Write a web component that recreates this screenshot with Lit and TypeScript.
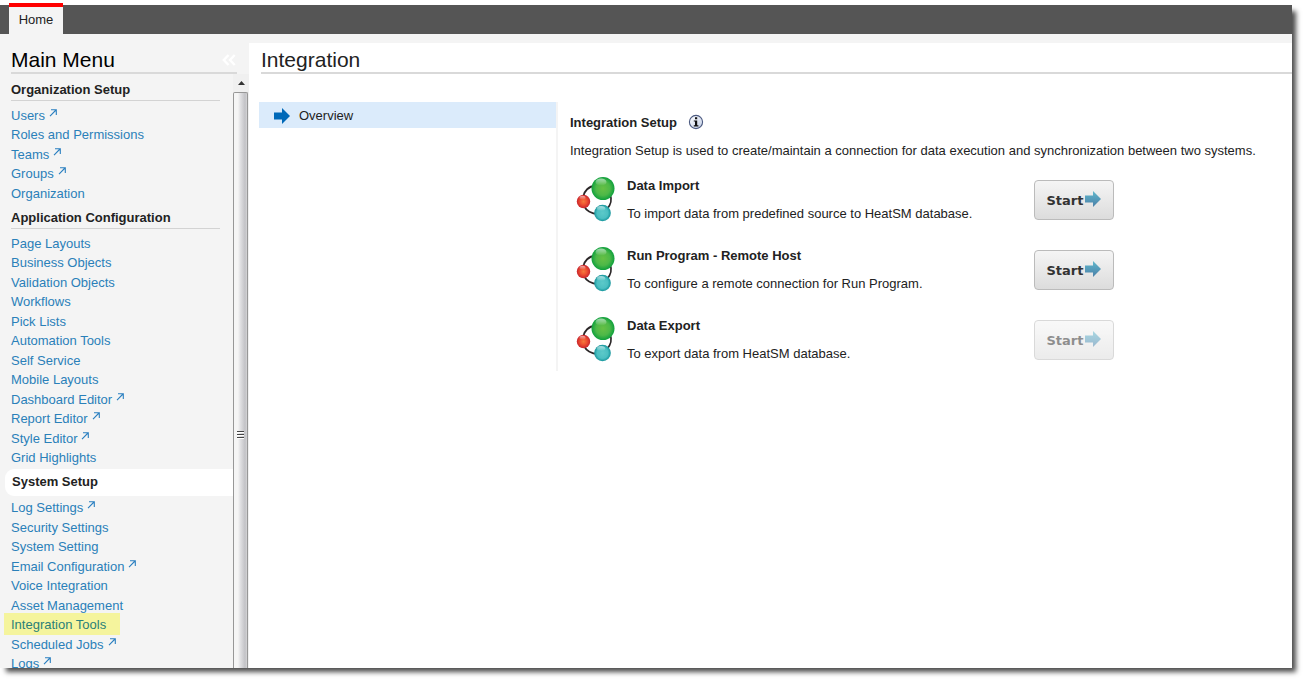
import { LitElement, html, css, svg, nothing } from "lit";
import { customElement } from "lit/decorators.js";
import { classMap } from "lit/directives/class-map.js";

interface MenuLink {
  label: string;
  external?: boolean;
  highlighted?: boolean;
}

interface MenuSection {
  title: string;
  active?: boolean;
  links: MenuLink[];
}

interface SetupTask {
  title: string;
  description: string;
  disabled?: boolean;
}

const MENU: MenuSection[] = [
  {
    title: "Organization Setup",
    links: [
      { label: "Users", external: true },
      { label: "Roles and Permissions" },
      { label: "Teams", external: true },
      { label: "Groups", external: true },
      { label: "Organization" },
    ],
  },
  {
    title: "Application Configuration",
    links: [
      { label: "Page Layouts" },
      { label: "Business Objects" },
      { label: "Validation Objects" },
      { label: "Workflows" },
      { label: "Pick Lists" },
      { label: "Automation Tools" },
      { label: "Self Service" },
      { label: "Mobile Layouts" },
      { label: "Dashboard Editor", external: true },
      { label: "Report Editor", external: true },
      { label: "Style Editor", external: true },
      { label: "Grid Highlights" },
    ],
  },
  {
    title: "System Setup",
    active: true,
    links: [
      { label: "Log Settings", external: true },
      { label: "Security Settings" },
      { label: "System Setting" },
      { label: "Email Configuration", external: true },
      { label: "Voice Integration" },
      { label: "Asset Management" },
      { label: "Integration Tools", highlighted: true },
      { label: "Scheduled Jobs", external: true },
      { label: "Logs", external: true },
    ],
  },
];

const TASKS: SetupTask[] = [
  { title: "Data Import", description: "To import data from predefined source to HeatSM database." },
  { title: "Run Program - Remote Host", description: "To configure a remote connection for Run Program." },
  { title: "Data Export", description: "To export data from HeatSM database.", disabled: true },
];

const arrowPath = svg`<path d="M0 4.5H8V0L16 8L8 16V11.5H0Z"/>`;

@customElement("main-menu")
export class MainMenu extends LitElement {
  static styles = css`
    :host {
      display: grid;
      grid-template-rows: auto minmax(0, 1fr);
      min-height: 0;
      background: #f4f4f4;
    }
    .head {
      display: flex;
      justify-content: space-between;
      align-items: flex-end;
      height: 29px;
      margin: 9px 12px 0 11px;
      border-bottom: 2px solid #d9d9d9;
    }
    .title {
      margin: 0;
      font-size: 21px;
      font-weight: 400;
      line-height: 24px;
      color: #000;
    }
    .collapse {
      display: flex;
      padding: 0 1px 6px 0;
      border: 0;
      background: none;
    }
    .body {
      display: grid;
      grid-template-columns: minmax(0, 1fr) 16px;
      min-height: 0;
    }
    .sections {
      min-height: 0;
      overflow: hidden;
      padding-top: 1px;
    }
    .heading {
      margin: 0 13px 5px 11px;
      padding: 5px 0 0;
      border-bottom: 1px solid #d3d3d3;
      font-size: 13px;
      font-weight: 700;
      line-height: 1.5;
      color: #222;
    }
    .heading.active {
      margin: 1px 0 2px 5px;
      padding: 3px 0 5px 7px;
      border: 0;
      border-radius: 9px 0 0 9px;
      background: #fff;
    }
    .links {
      margin: 0;
      padding: 0 0 0 11px;
      list-style: none;
      line-height: 1.5;
    }
    .link {
      color: #2a80b9;
      text-decoration: none;
    }
    .link.highlighted {
      margin-left: -7px;
      padding: 4px 14px 3px 7px;
      background: #f5f49d;
      color: #2a8078;
    }
    .external {
      width: 8px;
      height: 8px;
      margin-left: 4px;
      vertical-align: 3px;
    }
    .scroll {
      display: grid;
      grid-template-rows: 18px minmax(0, 1fr);
      min-height: 0;
      background: #f0f0f0;
    }
    .up {
      display: grid;
      place-items: center;
    }
    .thumb {
      display: grid;
      place-items: center;
      box-sizing: border-box;
      margin-right: 1px;
      border: 1px solid #979797;
      border-bottom: 0;
      border-radius: 2px 2px 0 0;
      background: linear-gradient(90deg, #f5f5f5 0 30%, #e4e4e6 45%, #c2c2c6 85%, #d4d4d6);
    }
    .grip {
      margin-top: 108px;
    }
  `;

  render() {
    return html`
      <div class="head">
        <h2 class="title">Main Menu</h2>
        <button class="collapse" aria-label="Collapse menu">
          <svg width="14" height="12" viewBox="0 0 14 12" fill="none" stroke="#fff" stroke-width="2.4">
            <path d="M6.5 1L1.8 6L6.5 11M12.7 1L8 6L12.7 11" />
          </svg>
        </button>
      </div>
      <div class="body">
        <nav class="sections" aria-label="Main Menu">
          ${MENU.map(
            (section) => html`
              <h3 class=${classMap({ heading: true, active: !!section.active })}>${section.title}</h3>
              <ul class="links">
                ${section.links.map(
                  (link) => html`<li>
                    <a class=${classMap({ link: true, highlighted: !!link.highlighted })} href="#"
                      >${link.label}${link.external
                        ? html`<svg class="external" viewBox="0 0 8 8" fill="none" stroke="#2a7fc0" stroke-width="1.1">
                            <path d="M1 7.2L7 1M2 .7H7.3V6" />
                          </svg>`
                        : nothing}</a
                    >
                  </li>`
                )}
              </ul>
            `
          )}
        </nav>
        <div class="scroll" aria-hidden="true">
          <div class="up">
            <svg width="7" height="4" viewBox="0 0 7 4" fill="#333"><path d="M0 4L3.5 0L7 4Z" /></svg>
          </div>
          <div class="thumb">
            <svg class="grip" width="7" height="8" viewBox="0 0 7 8" stroke="#444">
              <path d="M0 .5H7M0 3.5H7M0 6.5H7" />
              <path d="M0 1.5H7M0 4.5H7M0 7.5H7" stroke="#fff" />
            </svg>
          </div>
        </div>
      </div>
    `;
  }
}

@customElement("setup-task")
export class SetupTaskRow extends LitElement {
  static properties = { task: { attribute: false } };
  declare task: SetupTask;

  static styles = css`
    :host {
      display: grid;
      grid-template-columns: 57px minmax(0, 407px) 80px;
      height: 70px;
    }
    .icon {
      margin: 5px 0 0 6px;
    }
    .name {
      margin: 5px 0 8px;
      font-size: 13px;
      font-weight: 700;
      line-height: 20px;
      color: #222;
    }
    .text {
      margin: 0;
      line-height: 20px;
    }
    .start {
      display: flex;
      align-items: center;
      justify-content: center;
      gap: 2px;
      box-sizing: border-box;
      height: 40px;
      margin-top: 9px;
      padding: 0;
      border: 1px solid #bbb;
      border-radius: 4px;
      background: linear-gradient(#f5f5f5, #dcdcdc);
      color: #333;
      font: 700 13px "DejaVu Sans", sans-serif;
    }
    .start:disabled {
      opacity: 0.55;
    }
    .arrow {
      margin-bottom: 2px;
    }
  `;

  render() {
    const { title, description, disabled } = this.task;
    return html`
      <svg class="icon" width="40" height="46" viewBox="0 0 40 46" fill="none">
        <defs>
          <radialGradient id="green"><stop offset="0" stop-color="#67c044" /><stop offset=".6" stop-color="#4db848" /><stop offset="1" stop-color="#0fa03c" /></radialGradient>
          <radialGradient id="red"><stop offset="0" stop-color="#f47a3c" /><stop offset=".5" stop-color="#ee5030" /><stop offset="1" stop-color="#c9252c" /></radialGradient>
          <radialGradient id="teal"><stop offset="0" stop-color="#5cc9c9" /><stop offset=".65" stop-color="#4bbfc2" /><stop offset="1" stop-color="#16959b" /></radialGradient>
          <linearGradient id="shine" x2="0" y2="1"><stop stop-color="#fff" stop-opacity=".6" /><stop offset="1" stop-color="#fff" stop-opacity="0" /></linearGradient>
        </defs>
        <path d="M19 10C13 10 8 15 7 21M8 30C10 34 15 38 22 38M31 33C35 29 36 23 34 18" stroke="#2b2728" stroke-width="1.8" />
        <circle cx="27" cy="12.5" r="11.5" fill="url(#green)" />
        <circle cx="7.5" cy="25.5" r="6.7" fill="url(#red)" />
        <circle cx="26.5" cy="37" r="8.3" fill="url(#teal)" />
        <ellipse cx="25" cy="6" rx="5.5" ry="3.6" fill="url(#shine)" />
        <ellipse cx="6.5" cy="21.8" rx="3" ry="2" fill="url(#shine)" />
        <ellipse cx="25" cy="32.5" rx="4.2" ry="2.5" fill="url(#shine)" />
      </svg>
      <div>
        <h3 class="name">${title}</h3>
        <p class="text">${description}</p>
      </div>
      <button class="start" ?disabled=${!!disabled} aria-label=${"Start " + title}>
        Start
        <svg class="arrow" width="16" height="16" viewBox="0 0 16 16" fill="url(#arrow)">
          <defs>
            <linearGradient id="arrow" x2="0" y2="1"><stop stop-color="#62b8cc" /><stop offset="1" stop-color="#4a7fa8" /></linearGradient>
          </defs>
          ${arrowPath}
        </svg>
      </button>
    `;
  }
}

@customElement("integration-page")
export class IntegrationPage extends LitElement {
  static styles = css`
    :host {
      display: block;
      min-width: 0;
      background: #fff;
    }
    .title {
      height: 29px;
      margin: 0 0 0 12px;
      border-bottom: 2px solid #d9d9d9;
      font-size: 21px;
      font-weight: 400;
      line-height: 33px;
      color: #222;
    }
    .columns {
      display: grid;
      grid-template-columns: 297px minmax(0, 1fr);
      margin: 28px 20px 0 10px;
    }
    .step {
      display: flex;
      align-items: center;
      gap: 9px;
      height: 26px;
      padding-left: 15px;
      background: #dbebfb;
      color: #222;
      text-decoration: none;
    }
    .marker {
      margin-top: 2px;
    }
    .detail {
      padding: 11px 0 0 12px;
      border-left: 2px solid #f4f4f4;
    }
    .subtitle {
      display: flex;
      align-items: center;
      gap: 11px;
      margin: 0 0 8px;
      font-size: 13px;
      font-weight: 700;
      line-height: 20px;
    }
    .info {
      display: flex;
      padding: 0 0 2px;
      border: 0;
      background: none;
    }
    .intro {
      margin: 0 0 10px;
      line-height: 20px;
    }
    .tasks {
      height: 200px;
    }
  `;

  render() {
    return html`
      <h1 class="title">Integration</h1>
      <div class="columns">
        <nav aria-label="Steps">
          <a class="step" href="#">
            <svg class="marker" width="16" height="16" viewBox="0 0 16 16" fill="#0069b8">${arrowPath}</svg>
            Overview
          </a>
        </nav>
        <section class="detail">
          <h2 class="subtitle">
            Integration Setup
            <button class="info" aria-label="Information">
              <svg width="16" height="16" viewBox="0 0 16 16">
                <defs>
                  <linearGradient id="glass" x2="1" y2="1"><stop stop-color="#fff" /><stop offset="1" stop-color="#c3cfe6" /></linearGradient>
                </defs>
                <circle cx="8" cy="8" r="6.6" fill="url(#glass)" stroke="#4c5a80" stroke-width="1.1" />
                <path d="M7 3.2H9.2V5.2H7ZM5.8 6.4H9.2V11.2H10.4V12.4H5.8V11.2H7V7.5H5.8Z" fill="#111" />
              </svg>
            </button>
          </h2>
          <p class="intro">
            Integration Setup is used to create/maintain a connection for data execution and synchronization between two
            systems.
          </p>
          <div class="tasks">${TASKS.map((task) => html`<setup-task .task=${task}></setup-task>`)}</div>
        </section>
      </div>
    `;
  }
}

@customElement("app-root")
export class AppRoot extends LitElement {
  static styles = css`
    :host {
      display: block;
      box-sizing: border-box;
      height: 100vh;
      padding: 5px 15px 15px 0;
      overflow: hidden;
      background: #fff;
      color: #222;
      font: 13px "Liberation Sans", Arial, sans-serif;
    }
    .frame {
      display: grid;
      grid-template-rows: 29px minmax(0, 1fr);
      height: 100%;
      background: #f4f4f4;
      box-shadow: 5px 5px 5px -1px rgba(0, 0, 0, 0.7);
    }
    .tabs {
      display: flex;
      padding-left: 9px;
      background: #555;
    }
    .tab {
      box-sizing: border-box;
      width: 54px;
      height: 31px;
      margin-top: -2px;
      border-top: 4px solid #f00;
      background: #f4f4f4;
      color: #222;
      line-height: 26px;
      text-align: center;
      text-decoration: none;
    }
    .content {
      display: grid;
      grid-template-columns: 249px minmax(0, 1fr);
      grid-template-rows: minmax(0, 1fr);
      min-height: 0;
    }
    .page {
      margin-top: 9px;
    }
  `;

  render() {
    return html`
      <div class="frame">
        <nav class="tabs" aria-label="Workspaces"><a class="tab" href="#">Home</a></nav>
        <div class="content">
          <main-menu></main-menu>
          <integration-page class="page"></integration-page>
        </div>
      </div>
    `;
  }
}
